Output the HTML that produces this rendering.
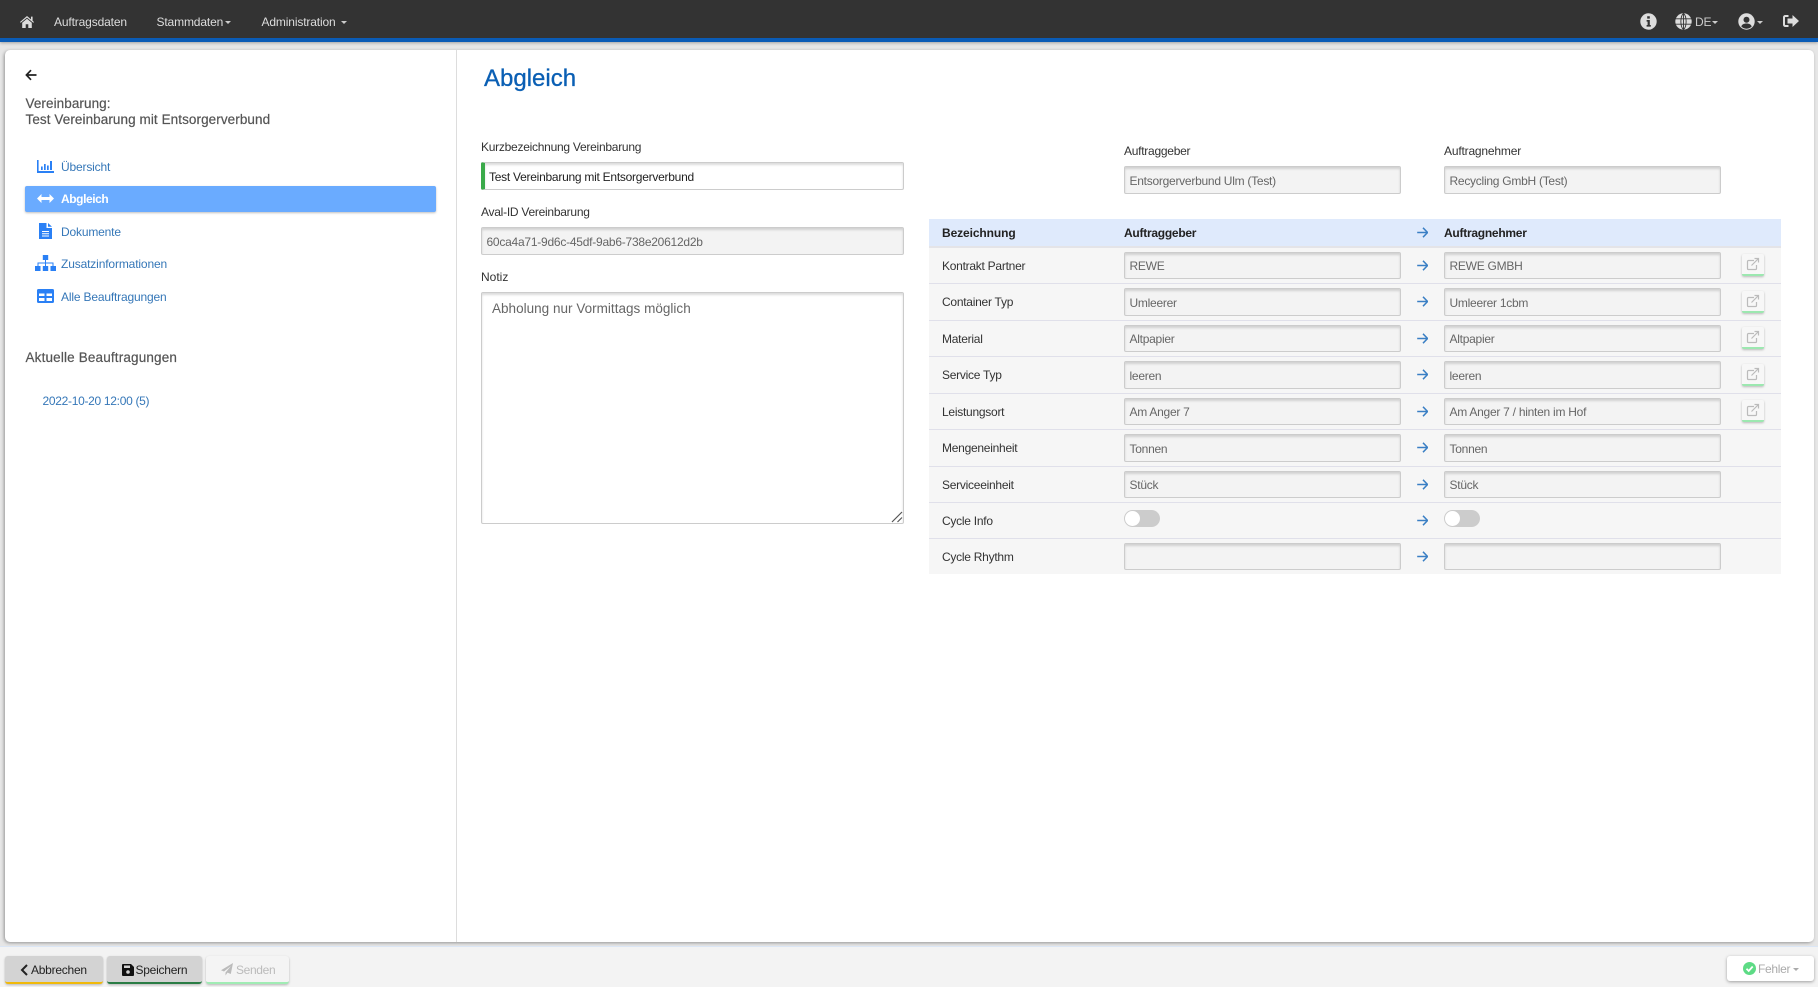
<!DOCTYPE html>
<html lang="de">
<head>
<meta charset="utf-8">
<title>Abgleich</title>
<style>
html,body{margin:0;padding:0;width:1818px;height:987px;overflow:hidden;background:#e6e6e6;font-family:"Liberation Sans",Arial,sans-serif;font-size:12px;color:#333}
*{box-sizing:border-box}
.abs,.t,.inp,.btn,svg{position:absolute}
.t{line-height:20px;height:20px;white-space:nowrap;letter-spacing:-.26px}
.nav{position:absolute;left:0;top:0;width:1818px;height:42px;background:#333;border-bottom:4px solid #0a5bb5;box-shadow:0 1px 3px rgba(0,0,0,.3)}
.t.nv{color:#ddd;letter-spacing:-.14px}
.caret{position:absolute;width:0;height:0;border-left:3.5px solid transparent;border-right:3.5px solid transparent;border-top:3.5px solid #ccc}
.card{position:absolute;left:5px;top:50px;width:1809px;height:892px;background:#fff;border-radius:5px;box-shadow:-1px 1px 3px rgba(0,0,0,.35)}
.div{position:absolute;left:456px;top:50px;width:1px;height:892px;background:#ddd}
.t.side{color:#555;font-size:13.5px;letter-spacing:.08px;-webkit-text-stroke:.2px #555}
.t.lnk{color:#3577b8;letter-spacing:-.17px}
.active{position:absolute;left:25px;top:186px;width:411px;height:26px;background:#6aabff;border-radius:2px;box-shadow:0 1px 2px rgba(0,0,0,.25)}
.inp{height:28px;width:277px;background:#f3f3f3;border:1px solid #ccc;border-radius:2px;box-shadow:inset 0 2px 2px rgba(0,0,0,.14);line-height:28px;padding-left:4.5px;color:#666;letter-spacing:-.26px;white-space:nowrap}
.inp.s{height:27px;line-height:26px}
.head{position:absolute;left:929px;top:219px;width:852px;height:29px;background:#dfeafc;border-bottom:2px solid #e4e4e8}
.rows{position:absolute;left:929px;top:248px;width:852px;height:326px;background:#f6f6f6}
.sep{position:absolute;left:929px;width:852px;height:1px;background:#e0e0ea}
.edit{position:absolute;left:1742px;width:22px;height:22px;background:#f7f7f7;border-radius:2px;border-bottom:2px solid #9ce8b0;box-shadow:0 1px 2px rgba(0,0,0,.25)}
.tog{position:absolute;width:36px;height:17px;background:#ccc;border-radius:9px}
.tog i{position:absolute;left:1px;top:1px;width:15px;height:15px;background:#fff;border-radius:50%}
.foot{position:absolute;left:0;top:946px;width:1818px;height:41px;background:#f3f3f3;border-top:1px solid #dbe6f5}
.btn{top:956px;height:28px;border-radius:3px;box-shadow:0 1px 2px rgba(0,0,0,.25);line-height:28px;white-space:nowrap;letter-spacing:-.25px}
b{letter-spacing:-.06px}
</style>
</head>
<body>

<div class="nav"></div>
<svg style="left:20px;top:15px" width="14" height="13" viewBox="0 0 14 13"><path fill="#ddd" d="M7 1 L11 4.4V1.6h1.6v4.2L14 7l-.7.8L7 2.6.7 7.8 0 7zM7 3.800l4.800 4V13H8.300V9.200H5.700V13H2.200V7.800z"/></svg>
<span class="t nv" style="left:54px;top:12px">Auftragsdaten</span>
<span class="t nv" style="left:156.500px;top:12px">Stammdaten</span><i class="caret" style="left:225px;top:20.500px"></i>
<span class="t nv" style="left:261.500px;top:12px">Administration</span><i class="caret" style="left:341px;top:20.500px"></i>

<svg style="left:1640px;top:13px" width="17" height="17" viewBox="0 0 17 17"><circle cx="8.500" cy="8.500" r="8.200" fill="#ddd"/><path fill="#333" d="M7.200 3.200h2.600v2.400H7.200zM6.600 7h3.200v5h1v1.600H6.600V12h1V8.600h-1z"/></svg>
<svg style="left:1675px;top:13px" width="17" height="17" viewBox="0 0 17 17"><circle cx="8.500" cy="8.500" r="8.200" fill="#ddd"/><path fill="none" stroke="#333" stroke-width=".9" d="M.5 5.800h16M.5 11.200h16M8.500.3v16.400M8.500.3C5 3.500 5 13.500 8.500 16.700M8.500.3C12 3.500 12 13.500 8.500 16.700"/></svg>
<span class="t nv" style="left:1695px;top:12px;color:#ccc">DE</span><i class="caret" style="left:1712px;top:20.500px"></i>
<svg style="left:1738px;top:13px" width="17" height="17" viewBox="0 0 17 17"><circle cx="8.500" cy="8.500" r="8.200" fill="#ddd"/><circle cx="8.500" cy="6.800" r="3" fill="#333"/><path fill="#333" d="M3.300 13.500c.6-2 2.500-3 5.200-3s4.600 1 5.200 3c-1.300 1.400-3.100 2.200-5.200 2.200s-3.900-.8-5.200-2.200z"/></svg>
<i class="caret" style="left:1757px;top:20.500px"></i>
<svg style="left:1783px;top:14px" width="16" height="14" viewBox="0 0 16 14"><path fill="#ddd" d="M5.500 1H2.400C1.100 1 0 2 0 3.400v7.200C0 12 1.100 13 2.400 13h3.100v-2H2.600c-.4 0-.6-.2-.6-.6V3.600c0-.4.2-.6.6-.6h2.900zM9.500 1 16 7l-6.500 6V9.500H4.500v-5h5z"/></svg>

<div class="card"></div>
<div class="div"></div>

<svg style="left:25px;top:69px" width="12" height="12" viewBox="0 0 12 12"><path fill="none" stroke="#222" stroke-width="1.700" d="M6 1.200 1.400 6 6 10.800M1.600 6H11.500"/></svg>
<span class="t side" style="left:25.500px;top:94px">Vereinbarung:</span>
<span class="t side" style="left:25.500px;top:110px">Test Vereinbarung mit Entsorgerverbund</span>

<svg style="left:37px;top:160px" width="17" height="13" viewBox="0 0 17 13"><path fill="#2a80f5" d="M0 0h1.600v11H17v2H0zM4 6.500h1.700V10H4zM7 4h1.700v6H7zM10 5.500h1.700V10H10zM13 1h2v9h-2z"/></svg>
<span class="t lnk" style="left:61px;top:156.500px">Übersicht</span>

<div class="active"></div>
<svg style="left:37px;top:193px" width="17" height="11" viewBox="0 0 17 11"><path fill="#fff" d="M0 5.500 4.500 1v3h8V1L17 5.500 12.500 10V7h-8v3z"/></svg>
<span class="t" style="left:61px;top:189px;color:#fff;font-weight:bold;letter-spacing:-.42px">Abgleich</span>

<svg style="left:39px;top:223px" width="13" height="16" viewBox="0 0 13 16"><path fill="#2a80f5" d="M0 0h7.500v5H13v11H0zM9 0l4 3.800H9z"/><path fill="#fff" d="M3 8h7v1H3zM3 10.300h7v1H3zM3 12.500h7v1H3z"/></svg>
<span class="t lnk" style="left:61px;top:221.500px">Dokumente</span>

<svg style="left:35px;top:255px" width="21" height="16" viewBox="0 0 21 16"><path fill="#2a80f5" d="M7.800 0h5.400v5H7.800zM0 11h5.500v5H0zM7.800 11h5.400v5H7.800zM15.500 11H21v5h-5.500z"/><path fill="#2a80f5" d="M10 5h1v2.500h7.500V11h-1V8.500H11V11h-1V8.500H3.500V11h-1V7.500H10z"/></svg>
<span class="t lnk" style="left:61px;top:254px;letter-spacing:-.14px">Zusatzinformationen</span>

<svg style="left:37px;top:289px" width="17" height="14" viewBox="0 0 17 14"><path fill="#2a80f5" d="M1.500 0h14A1.500 1.500 0 0 1 17 1.500v11a1.500 1.500 0 0 1-1.500 1.500h-14A1.500 1.500 0 0 1 0 12.500v-11A1.500 1.500 0 0 1 1.500 0z"/><path fill="#fff" d="M2 4.500h5.500V7H2zM9.500 4.500H15V7H9.500zM2 9h5.500v3H2zM9.500 9H15v3H9.500z"/></svg>
<span class="t lnk" style="left:61px;top:287px">Alle Beauftragungen</span>

<span class="t side" style="left:25.500px;top:348px;letter-spacing:.16px">Aktuelle Beauftragungen</span>
<span class="t lnk" style="left:42.500px;top:391px;letter-spacing:-.3px">2022-10-20 12:00 (5)</span>

<span class="abs" style="left:484px;top:65px;font-size:24px;line-height:28px;color:#0a5fb4;-webkit-text-stroke:.3px #0a5fb4">Abgleich</span>

<span class="t" style="left:481px;top:137px">Kurzbezeichnung Vereinbarung</span>
<div class="inp" style="left:481px;top:162px;width:423px;background:#fff;border-left:4px solid #3aaa4a;padding-left:4px;color:#222">Test Vereinbarung mit Entsorgerverbund</div>
<span class="t" style="left:481px;top:202px">Aval-ID Vereinbarung</span>
<div class="inp" style="left:481px;top:227px;width:423px;letter-spacing:-.24px">60ca4a71-9d6c-45df-9ab6-738e20612d2b</div>
<span class="t" style="left:481px;top:267px;letter-spacing:0">Notiz</span>
<div class="inp" style="left:481px;top:292px;width:423px;height:232px;background:#fff;padding:6px 0 0 10px;font-size:13.500px;line-height:20px;letter-spacing:.02px">Abholung nur Vormittags möglich</div>
<svg style="left:891px;top:511px" width="12" height="12" viewBox="0 0 12 12"><path fill="none" stroke="#555" stroke-width="1.200" d="M1 11 11 1M6.500 11 11 6.500"/></svg>

<span class="t" style="left:1124px;top:141px">Auftraggeber</span>
<div class="inp" style="left:1124px;top:166px">Entsorgerverbund Ulm (Test)</div>
<span class="t" style="left:1444px;top:141px;letter-spacing:-.18px">Auftragnehmer</span>
<div class="inp" style="left:1444px;top:166px">Recycling GmbH (Test)</div>

<div class="head"></div>
<div class="rows"></div>
<div class="sep" style="top:283px"></div>
<div class="sep" style="top:320px"></div>
<div class="sep" style="top:356px"></div>
<div class="sep" style="top:393px"></div>
<div class="sep" style="top:429px"></div>
<div class="sep" style="top:466px"></div>
<div class="sep" style="top:502px"></div>
<div class="sep" style="top:538px"></div>

<b class="t" style="left:942px;top:222.500px;color:#222;letter-spacing:-.1px">Bezeichnung</b>
<b class="t" style="left:1124px;top:222.500px;color:#222">Auftraggeber</b>
<b class="t" style="left:1444px;top:222.500px;color:#222">Auftragnehmer</b>

<span class="t" style="left:942px;top:256px">Kontrakt Partner</span>
<span class="t" style="left:942px;top:292px">Container Typ</span>
<span class="t" style="left:942px;top:329px">Material</span>
<span class="t" style="left:942px;top:365px">Service Typ</span>
<span class="t" style="left:942px;top:402px">Leistungsort</span>
<span class="t" style="left:942px;top:438px">Mengeneinheit</span>
<span class="t" style="left:942px;top:475px">Serviceeinheit</span>
<span class="t" style="left:942px;top:511px">Cycle Info</span>
<span class="t" style="left:942px;top:547px">Cycle Rhythm</span>

<div class="inp s" style="left:1124px;top:252px">REWE</div>
<div class="inp s" style="left:1444px;top:252px">REWE GMBH</div>
<div class="inp" style="left:1124px;top:288px">Umleerer</div>
<div class="inp" style="left:1444px;top:288px">Umleerer 1cbm</div>
<div class="inp s" style="left:1124px;top:325px">Altpapier</div>
<div class="inp s" style="left:1444px;top:325px">Altpapier</div>
<div class="inp" style="left:1124px;top:361px">leeren</div>
<div class="inp" style="left:1444px;top:361px">leeren</div>
<div class="inp s" style="left:1124px;top:398px">Am Anger 7</div>
<div class="inp s" style="left:1444px;top:398px">Am Anger 7 / hinten im Hof</div>
<div class="inp" style="left:1124px;top:434px">Tonnen</div>
<div class="inp" style="left:1444px;top:434px">Tonnen</div>
<div class="inp s" style="left:1124px;top:471px">Stück</div>
<div class="inp s" style="left:1444px;top:471px">Stück</div>
<div class="tog" style="left:1124px;top:510px"><i></i></div>
<div class="tog" style="left:1444px;top:510px"><i></i></div>
<div class="inp s" style="left:1124px;top:543px"></div>
<div class="inp s" style="left:1444px;top:543px"></div>

<svg width="0" height="0" style="left:0;top:0"><defs>
<g id="ar"><path fill="none" stroke="#3a7fc4" stroke-width="1.500" d="M6 .8 10.600 5.500 6 10.200M10.400 5.500H.2"/></g>
<g id="ed"><path fill="none" stroke="#bbb" stroke-width="1.200" d="M8 3.500H2.500a1 1 0 0 0-1 1v7a1 1 0 0 0 1 1h7a1 1 0 0 0 1-1V8M5.500 8.500 12 2M8.500 1.500H12.500V5.500"/></g>
</defs></svg>
<svg style="left:1417px;top:227px" width="11" height="11"><use href="#ar"/></svg>
<svg style="left:1417px;top:260px" width="11" height="11"><use href="#ar"/></svg>
<svg style="left:1417px;top:296px" width="11" height="11"><use href="#ar"/></svg>
<svg style="left:1417px;top:333px" width="11" height="11"><use href="#ar"/></svg>
<svg style="left:1417px;top:369px" width="11" height="11"><use href="#ar"/></svg>
<svg style="left:1417px;top:406px" width="11" height="11"><use href="#ar"/></svg>
<svg style="left:1417px;top:442px" width="11" height="11"><use href="#ar"/></svg>
<svg style="left:1417px;top:479px" width="11" height="11"><use href="#ar"/></svg>
<svg style="left:1417px;top:515px" width="11" height="11"><use href="#ar"/></svg>
<svg style="left:1417px;top:551px" width="11" height="11"><use href="#ar"/></svg>

<div class="edit" style="top:254px"></div>
<div class="edit" style="top:291px"></div>
<div class="edit" style="top:327px"></div>
<div class="edit" style="top:364px"></div>
<div class="edit" style="top:400px"></div>
<svg style="left:1746px;top:257px" width="14" height="14"><use href="#ed"/></svg>
<svg style="left:1746px;top:294px" width="14" height="14"><use href="#ed"/></svg>
<svg style="left:1746px;top:330px" width="14" height="14"><use href="#ed"/></svg>
<svg style="left:1746px;top:367px" width="14" height="14"><use href="#ed"/></svg>
<svg style="left:1746px;top:403px" width="14" height="14"><use href="#ed"/></svg>

<div class="foot"></div>
<div class="btn" style="left:4.500px;width:98px;background:#d3d3d3;border-bottom:2px solid #f0b90b;padding-left:26.500px;color:#222">Abbrechen</div>
<svg style="left:20px;top:964px" width="9" height="12" viewBox="0 0 9 12"><path fill="none" stroke="#222" stroke-width="2" d="M7 1 2 6l5 5"/></svg>
<div class="btn" style="left:107px;width:95px;background:#d3d3d3;border-bottom:2px solid #2a7d45;padding-left:28.500px;color:#222">Speichern</div>
<svg style="left:122px;top:964px" width="12" height="12" viewBox="0 0 12 12"><path fill="#111" d="M1 0h8l3 3v8a1 1 0 0 1-1 1H1a1 1 0 0 1-1-1V1a1 1 0 0 1 1-1z"/><path fill="#d3d3d3" d="M2 1.500h6v2.500H2z"/><circle cx="6" cy="8" r="1.800" fill="#d3d3d3"/></svg>
<div class="btn" style="left:206px;width:83px;background:#f4f4f4;border-bottom:2px solid #a0ecb4;padding-left:30px;color:#bbb;letter-spacing:-.35px">Senden</div>
<svg style="left:221px;top:963px" width="12" height="13" viewBox="0 0 12 13"><path fill="#bbb" d="M12 0 9.800 11 6.500 9.600 4.500 12.500V9.500L10 3 3 8.500 0 7.300z"/></svg>
<div class="btn" style="left:1727px;width:87px;height:25px;background:#fff;line-height:26px;padding-left:31px;color:#aaa;box-shadow:0 1px 3px rgba(0,0,0,.35);letter-spacing:-.3px">Fehler</div>
<svg style="left:1743px;top:962px" width="13" height="13" viewBox="0 0 13 13"><circle cx="6.500" cy="6.500" r="6.500" fill="#5ddb85"/><path fill="none" stroke="#fff" stroke-width="1.800" d="M3.500 6.800 5.700 9 9.700 4.500"/></svg>
<i class="caret" style="left:1793px;top:967.500px;border-top-color:#aaa"></i>

</body>
</html>
